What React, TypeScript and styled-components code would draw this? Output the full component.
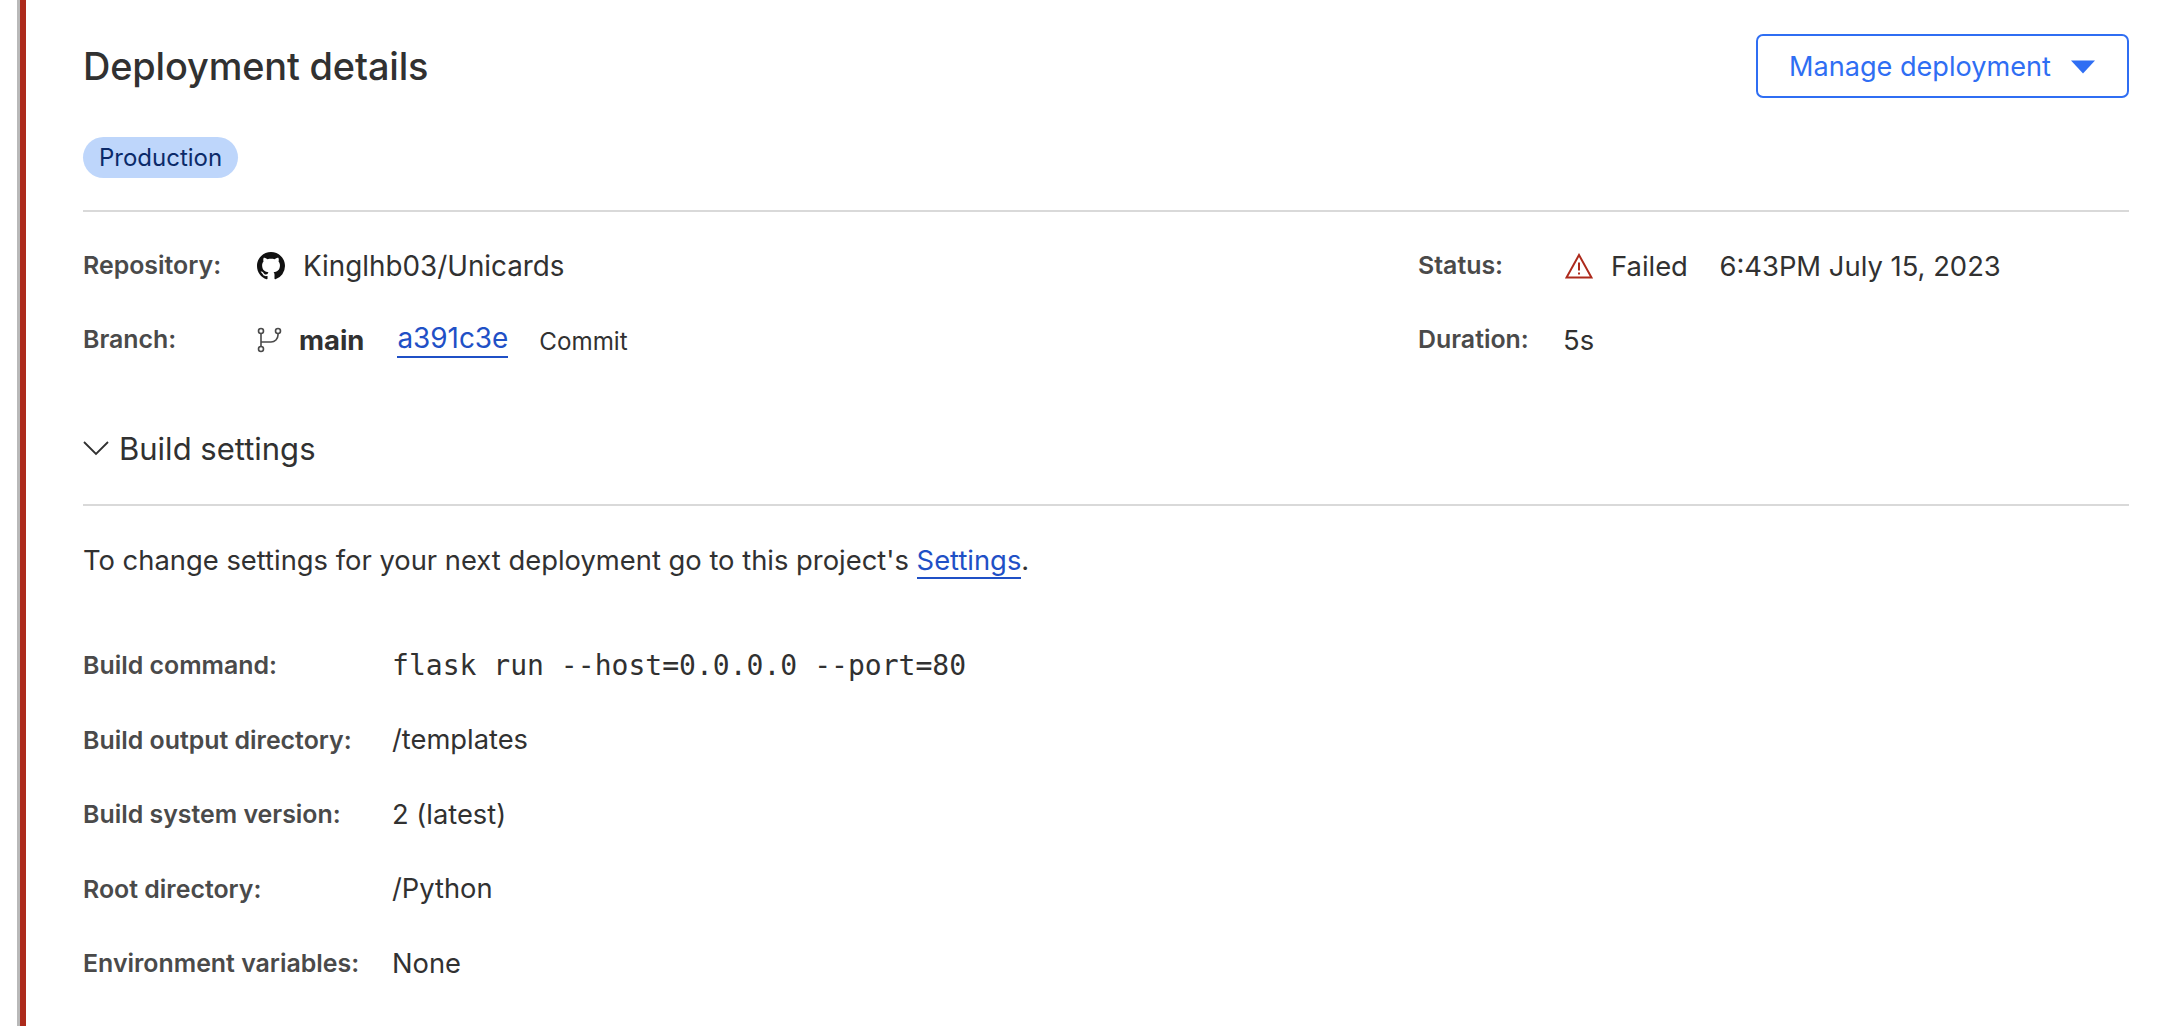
import React from "react";
import styled, { createGlobalStyle } from "styled-components";

const Global = createGlobalStyle`
  html, body { margin: 0; padding: 0; background: #fff; }
  body { font-family: Inter, "Liberation Sans", sans-serif; color: #313131; overflow: hidden; }
`;
const Frame = styled.div`
  height: 1026px;
  box-sizing: border-box;
  margin-left: 17px;
  border-left: 3px solid #b9b9b9;
`;
const Card = styled.main`
  height: 100%;
  box-sizing: border-box;
  border-left: 6px solid #ad2a1c;
  padding: 34px 49px 0 57px;
`;
const Header = styled.header`
  display: flex;
  justify-content: space-between;
  align-items: flex-start;
  height: 103px;
`;
const Title = styled.h1`
  margin: 0;
  font-size: 37.9px;
  line-height: 64px;
  font-weight: 450;
  letter-spacing: -0.15px;
  color: #313131;
`;
const ManageButton = styled.button`
  display: flex;
  align-items: center;
  gap: 19px;
  width: 373px;
  height: 64px;
  box-sizing: border-box;
  padding: 0 31px;
  border: 2px solid #2f6ef3;
  border-radius: 7px;
  background: #fff;
  color: #2f6ef3;
  font: 400 27.1px Inter, sans-serif;
  white-space: nowrap;
`;
const Badge = styled.span`
  display: inline-flex;
  align-items: center;
  height: 41px;
  padding: 0 16px;
  border-radius: 21px;
  background: #bed6fb;
  color: #0b2a69;
  font-size: 24px;
`;
const Rule = styled.hr`
  margin: 0;
  border: 0;
  height: 2px;
  background: #d9d9d9;
`;
const TopRule = styled(Rule)`
  margin-top: 32px;
`;
const Meta = styled.section`
  display: grid;
  grid-template-columns: 1335px 1fr;
  padding-top: 17px;
`;
const MetaRow = styled.div<{ $label: number }>`
  display: grid;
  grid-template-columns: ${(p) => p.$label}px auto;
  justify-content: start;
  align-items: center;
  height: 74px;
`;
const Label = styled.span`
  position: relative;
  top: -1px;
  font-size: 24.9px;
  font-weight: 600;
  color: #4a4a4a;
  white-space: nowrap;
`;
const Value = styled.span`
  display: flex;
  align-items: center;
  font-size: 27.4px;
  color: #313131;
  white-space: nowrap;
`;
const RepoName = styled.span`
  font-size: 27.8px;
`;
const IconSlot = styled.span<{ $w: number; $offset?: number }>`
  display: inline-flex;
  width: ${(p) => p.$w}px;
  padding-left: ${(p) => p.$offset ?? 0}px;
  flex: none;
`;
const BranchName = styled.strong`
  font-weight: 700;
  margin-right: 33px;
`;
const TextLink = styled.a`
  color: #1f50c6;
  text-decoration: none;
  border-bottom: 2px solid #1f50c6;
  line-height: 1.2;
`;
const CommitLink = styled(TextLink)`
  font-size: 27.9px;
`;
const CommitNote = styled.span`
  margin-left: 31px;
  padding-top: 3px;
  font-size: 24.2px;
`;
const Timestamp = styled.span`
  margin-left: 31.5px;
`;
const Disclosure = styled.div`
  display: flex;
  align-items: center;
  gap: 10px;
  height: 64px;
  margin-top: 39px;
  font-size: 31px;
  color: #313131;
`;
const SettingsRule = styled(Rule)`
  margin-top: 24px;
`;
const Note = styled.p`
  margin: 35px 0 0;
  font-size: 27.36px;
  line-height: 38px;
`;
const Settings = styled.dl`
  display: grid;
  grid-template-columns: 309px 1fr;
  grid-auto-rows: 74.5px;
  align-items: center;
  margin: 49px 0 0;
`;
const SettingLabel = styled.dt`
  font-size: 24.9px;
  font-weight: 600;
  color: #4a4a4a;
`;
const SettingValue = styled.dd`
  margin: 0;
  font-size: 27.3px;
  color: #313131;
`;
const Mono = styled.code`
  font-family: "DejaVu Sans Mono", monospace;
  font-size: 28.05px;
`;

const GitHubIcon = () => (
  <svg width="28" height="28" viewBox="0 0 16 16" fill="#111">
    <path d="M8 0C3.58 0 0 3.58 0 8c0 3.54 2.29 6.53 5.47 7.59.4.07.55-.17.55-.38 0-.19-.01-.82-.01-1.49-2.01.37-2.53-.49-2.69-.94-.09-.23-.48-.94-.82-1.13-.28-.15-.68-.52-.01-.53.63-.01 1.08.58 1.23.82.72 1.21 1.87.87 2.33.66.07-.52.28-.87.51-1.07-1.78-.2-3.64-.89-3.64-3.95 0-.87.31-1.59.82-2.15-.08-.2-.36-1.02.08-2.12 0 0 .67-.21 2.2.82.64-.18 1.32-.27 2-.27s1.36.09 2 .27c1.53-1.04 2.2-.82 2.2-.82.44 1.1.16 1.92.08 2.12.51.56.82 1.27.82 2.15 0 3.07-1.87 3.75-3.65 3.95.29.25.54.73.54 1.48 0 1.07-.01 1.93-.01 2.2 0 .21.15.46.55.38A8.01 8.01 0 0 0 16 8c0-4.42-3.58-8-8-8z" />
  </svg>
);
const BranchIcon = () => (
  <svg width="26" height="26" viewBox="0 0 26 26" fill="none" stroke="#4a4a4a" strokeWidth="1.6">
    <circle cx="4" cy="4" r="2.5" />
    <circle cx="4" cy="22" r="2.5" />
    <circle cx="21" cy="4" r="2.5" />
    <path d="M4 6.5v13M4 15h10a7 7 0 0 0 7-7V6.5" />
  </svg>
);
const WarningIcon = () => (
  <svg width="28" height="26" viewBox="0 0 28 26" fill="none">
    <path d="M14 2 L26.5 24.5 H1.5 Z" stroke="#ad2a1c" strokeWidth="2" strokeLinejoin="miter" />
    <path d="M14 9.5v8M14 19.5v2" stroke="#ad2a1c" strokeWidth="2" />
  </svg>
);
const CaretDown = () => (
  <svg width="26" height="15" viewBox="0 0 26 15" fill="#2f6ef3">
    <path d="M1 1.5h24L13 14.5z" />
  </svg>
);
const Chevron = () => (
  <svg width="26" height="16" viewBox="0 0 26 16" fill="none" stroke="#313131" strokeWidth="1.8">
    <path d="M1 2l12 12L25 2" />
  </svg>
);

const settings: [string, React.ReactNode][] = [
  ["Build command:", <Mono>flask run --host=0.0.0.0 --port=80</Mono>],
  ["Build output directory:", "/templates"],
  ["Build system version:", "2 (latest)"],
  ["Root directory:", "/Python"],
  ["Environment variables:", "None"],
];

export default function App() {
  return (
    <Frame>
      <Global />
      <Card>
        <Header>
          <Title>Deployment details</Title>
          <ManageButton>
            Manage deployment
            <CaretDown />
          </ManageButton>
        </Header>
        <Badge>Production</Badge>
        <TopRule />
        <Meta>
          <div>
            <MetaRow $label={174}>
              <Label>Repository:</Label>
              <Value>
                <IconSlot $w={46}><GitHubIcon /></IconSlot>
                <RepoName>Kinglhb03/Unicards</RepoName>
              </Value>
            </MetaRow>
            <MetaRow $label={174}>
              <Label>Branch:</Label>
              <Value>
                <IconSlot $w={42}><BranchIcon /></IconSlot>
                <BranchName>main</BranchName>
                <CommitLink>a391c3e</CommitLink>
                <CommitNote>Commit</CommitNote>
              </Value>
            </MetaRow>
          </div>
          <div>
            <MetaRow $label={146}>
              <Label>Status:</Label>
              <Value>
                <IconSlot $w={46} $offset={1}><WarningIcon /></IconSlot>
                Failed
                <Timestamp>6:43PM July 15, 2023</Timestamp>
              </Value>
            </MetaRow>
            <MetaRow $label={145}>
              <Label>Duration:</Label>
              <Value>5s</Value>
            </MetaRow>
          </div>
        </Meta>
        <Disclosure>
          <Chevron />
          Build settings
        </Disclosure>
        <SettingsRule />
        <Note>
          To change settings for your next deployment go to this project's <TextLink>Settings</TextLink>.
        </Note>
        <Settings>
          {settings.map(([k, v]) => (
            <React.Fragment key={k}>
              <SettingLabel>{k}</SettingLabel>
              <SettingValue>{v}</SettingValue>
            </React.Fragment>
          ))}
        </Settings>
      </Card>
    </Frame>
  );
}
